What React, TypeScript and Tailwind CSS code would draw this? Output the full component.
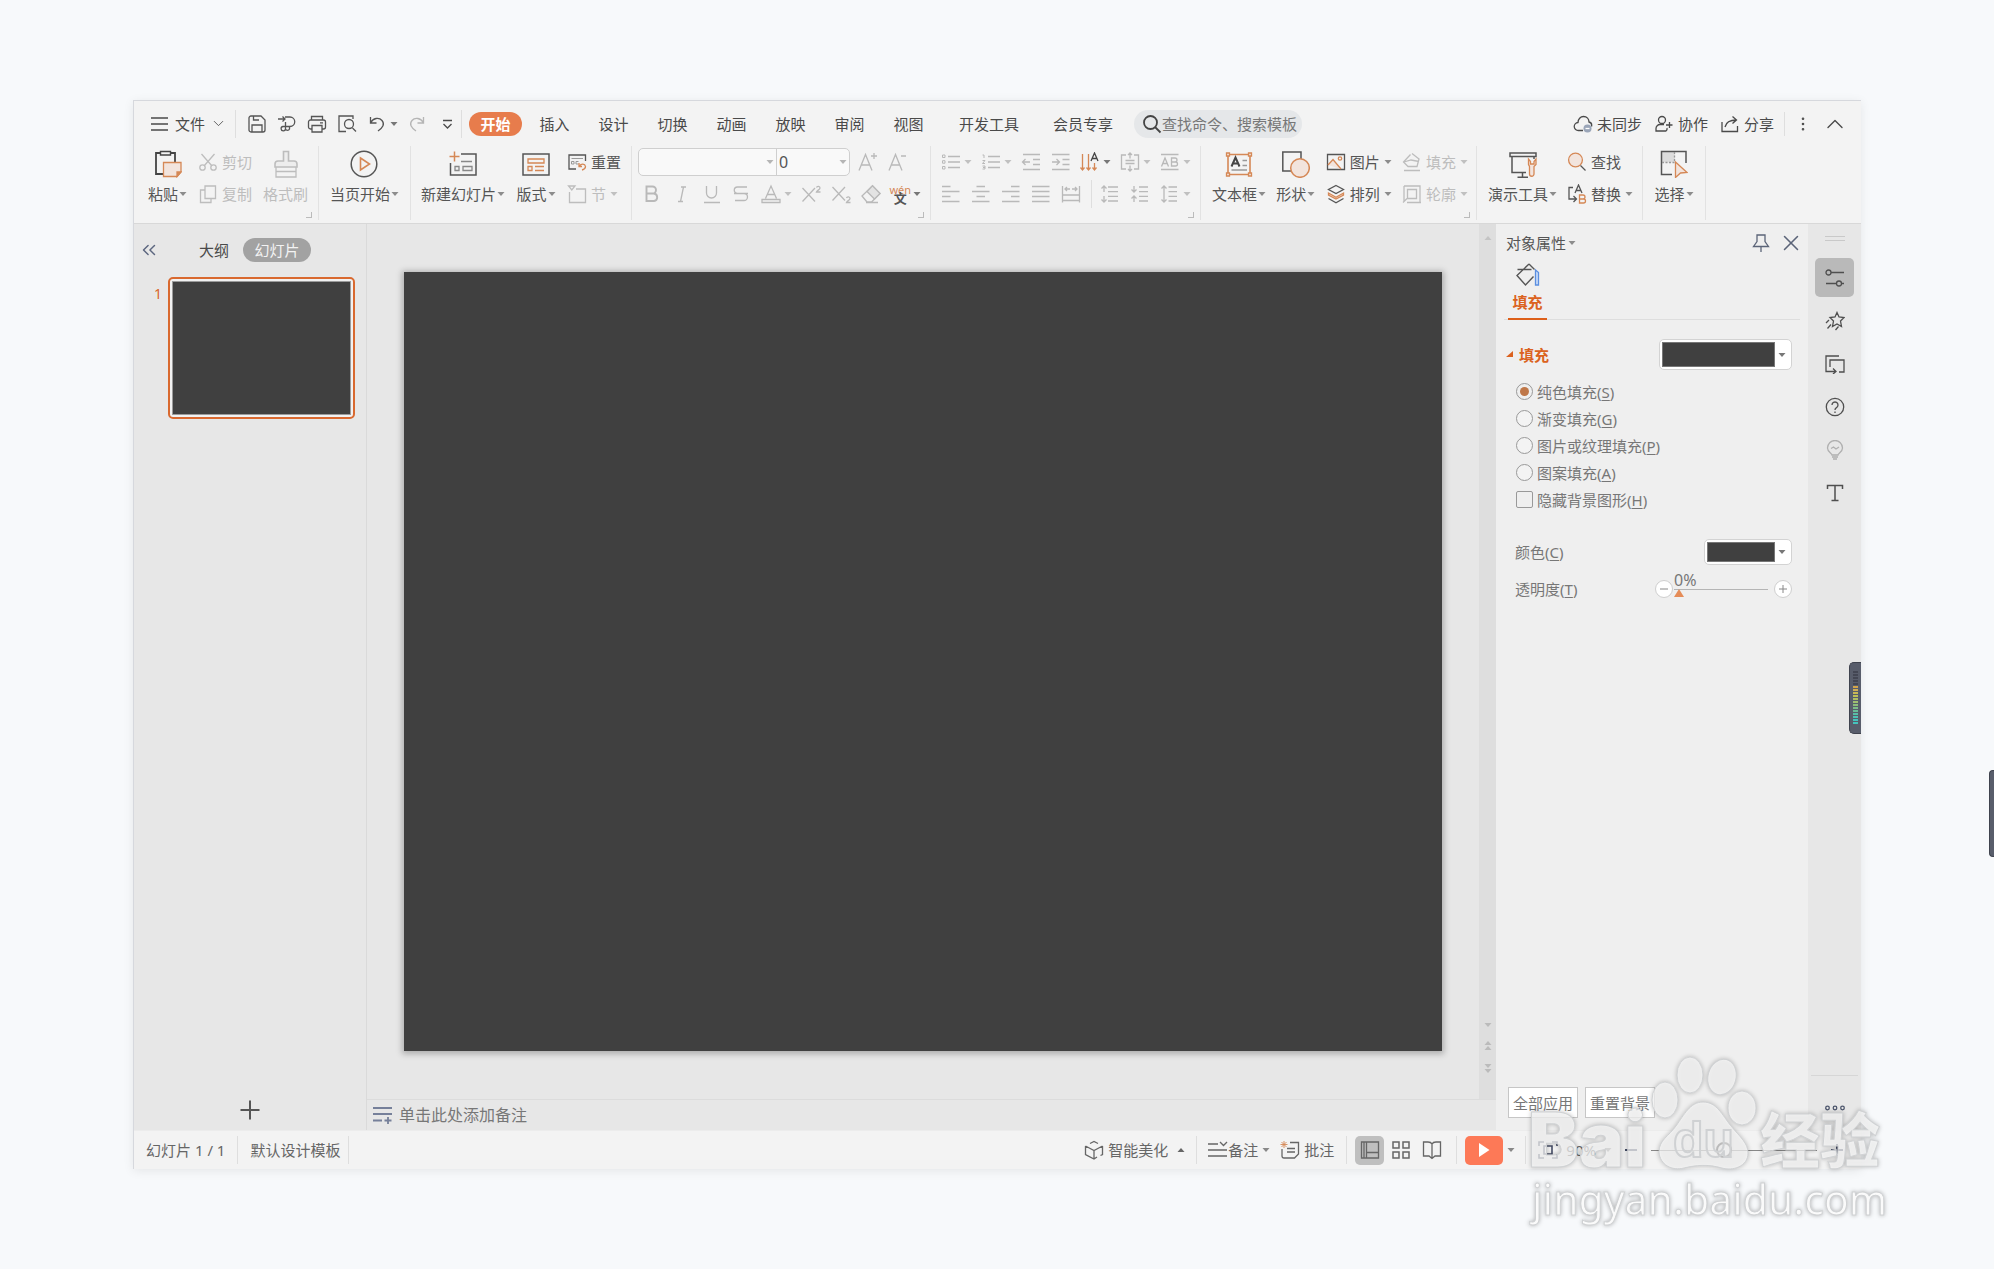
import React from 'react';
import { ChevronDown, ChevronUp, ChevronsLeft, MoreVertical, X } from 'lucide-react';

interface IconProps {
  size?: number;
  className?: string;
  children: React.ReactNode;
}

// Small icons use a 20x20 box, large ribbon icons a 28x28 one
const Icon: React.FC<IconProps> = ({ size = 20, className = '', children }) => (
  <svg
    width={size}
    height={size}
    viewBox={`0 0 ${size} ${size}`}
    fill="none"
    stroke="currentColor"
    strokeWidth="1.3"
    className={`shrink-0 ${className}`}
    aria-hidden="true"
  >
    {children}
  </svg>
);

const Caret: React.FC<{ className?: string; up?: boolean }> = ({ className = 'text-[#8c8c8c]', up = false }) => (
  <svg width="8" height="8" viewBox="0 0 8 8" className={`shrink-0 ${className}`} aria-hidden="true">
    <path d={up ? 'M4 2 L7.5 6 H0.5 Z' : 'M0.5 2 H7.5 L4 6 Z'} fill="currentColor" />
  </svg>
);

const ORANGE = '#d58856';
const PEACH = '#f2e4dd';

const icons = {
  menu: (
    <Icon>
      <path d="M1 4H18M1 10H18M1 16H18" />
    </Icon>
  ),
  save: (
    <Icon>
      <path d="M2 4a2 2 0 0 1 2-2H14l4 4V16a2 2 0 0 1-2 2H4a2 2 0 0 1-2-2ZM5 18V11H15V18M6.500 2V6H12" />
    </Icon>
  ),
  exportPdf: (
    <Icon>
      <path d="M1 5H8M5.500 2.500L8 5L5.500 7.500M8 3H13a4.500 4.500 0 0 1 0 9.500H6a2.200 2.200 0 1 0 2.500 2.200V8M8.500 12.500V15a2.200 2.200 0 0 0 4 0V12.500" />
    </Icon>
  ),
  print: (
    <Icon>
      <path d="M4.500 6V2.500H15.500V6M4.500 15H3.500a2 2 0 0 1-2-2V8a2 2 0 0 1 2-2H16.500a2 2 0 0 1 2 2V13a2 2 0 0 1-2 2H15.500M5 11.500H15V18H5ZM13 8.800H16" />
    </Icon>
  ),
  preview: (
    <Icon>
      <path d="M9 17.500H2V2H16V5M15.500 14L19 17.500" />
      <circle cx="12" cy="10" r="4.500" />
    </Icon>
  ),
  undo: (
    <Icon>
      <path d="M3.500 3V9H9.500M3.800 8.500C6 4 12 3 15 6.500C18 10 16 13.500 11 17" />
    </Icon>
  ),
  redo: (
    <Icon className="text-[#b5b5b5]">
      <path d="M16.500 3V9H10.500M16.200 8.500C14 4 8 3 5 6.500C2 10 4 13.500 9 17" />
    </Icon>
  ),
  more: (
    <Icon>
      <path d="M6 6.500H15M6.500 10L10.500 14L14.500 10" />
    </Icon>
  ),
  search: (
    <Icon className="text-[#444]">
      <circle cx="8.500" cy="8.500" r="6.500" strokeWidth="1.800" />
      <path d="M13 13L18.500 18.500" strokeWidth="1.800" />
    </Icon>
  ),
  cloud: (
    <Icon>
      <path d="M10 16.500H5.500a4 4 0 0 1-0.500-8C5 5 7.500 2.500 10.500 2.500C14 2.500 16 5 16 8C18 8.500 19 10.500 18.500 12.500" />
      <circle cx="14.500" cy="14.500" r="4" fill="#9aa5b8" stroke="none" />
      <path d="M12.500 14.500H16.500" stroke="#fff" />
    </Icon>
  ),
  person: (
    <Icon>
      <circle cx="8" cy="6" r="3.500" />
      <path d="M12 17H2V14.500a4 4 0 0 1 4-4H10M12 17a3 3 0 0 0 1-3M12 11H18.500M15.500 8V14" />
    </Icon>
  ),
  share: (
    <Icon>
      <path d="M2 8V17.500H17.500V12M5 13C6 8 10 6 16.500 6M12.500 2.500L16.500 6L12.500 9.500" />
    </Icon>
  ),
  paste: (
    <Icon size={28}>
      <path d="M10 24H2V3H21V12" stroke="#444" strokeWidth="1.800" />
      <path d="M6.500 1.500H16.500V5H6.500Z" stroke="#444" strokeWidth="1.400" fill="#f3f3f3" />
      <path d="M9.500 12.500H27V22L23 26.500H9.500Z" stroke={ORANGE} fill={PEACH} />
      <path d="M27 22H23V26.500Z" fill={ORANGE} stroke={ORANGE} />
    </Icon>
  ),
  cut: (
    <Icon>
      <path d="M3.500 2L14 14M16.500 2L6 14" />
      <circle cx="4.500" cy="15.500" r="2.700" />
      <circle cx="15.500" cy="15.500" r="2.700" />
    </Icon>
  ),
  copy: (
    <Icon>
      <path d="M7 2H17.500V14.500H7ZM7 6H2.500V18.500H13V14.500" />
    </Icon>
  ),
  brush: (
    <Icon size={28}>
      <path d="M11.500 11V1.500H16.500V11H22q3 0 3 3V17H3V14q0-3 3-3Z" fill="#ededed" strokeWidth="1.600" />
      <path d="M4 17V27H24V17M4 21.500H24" />
    </Icon>
  ),
  play: (
    <Icon size={28}>
      <circle cx="14" cy="14" r="12.800" strokeWidth="1.500" />
      <path d="M10.500 8L19.500 14L10.500 20Z" stroke={ORANGE} strokeWidth="1.600" />
    </Icon>
  ),
  newSlide: (
    <Icon size={28}>
      <path d="M12 4H27V25H1.500V13" strokeWidth="1.500" />
      <path d="M12 11.500H23M14 16.500H23V20.500H14ZM6 16.500H10V20.500H6Z" stroke="#888" />
      <path d="M5.500 1.500V11.500M0.500 6.500H10.500" stroke={ORANGE} strokeWidth="1.500" />
    </Icon>
  ),
  layout: (
    <Icon size={28}>
      <path d="M1 4H27V25H1Z" strokeWidth="1.500" />
      <path d="M6 9H22V13H6ZM6 16.500H10V20.500H6ZM13 16.500H22M13 20.500H22" stroke={ORANGE} />
    </Icon>
  ),
  reset: (
    <Icon>
      <path d="M9 17H2V3H18.500V9" />
      <path d="M4.500 6.500H16M4.500 9.500H7V12H4.500ZM11.500 9.500H9V12H11.500" stroke="#999" strokeWidth="1" />
      <path d="M12 11V14.500H15M12.500 14C14 11.500 18 11.500 18.500 14.500C18.500 16.500 17 17.500 15 18" stroke={ORANGE} />
    </Icon>
  ),
  section: (
    <Icon>
      <path d="M9 5H18.500V18.500H2.500V8M1.500 2H8L4.800 6Z" />
    </Icon>
  ),
  bold: (
    <Icon>
      <path d="M4.500 2.500H10.500a3.500 3.500 0 0 1 0 7H4.500ZM4.500 9.500H12a3.800 3.800 0 0 1 0 7.500H4.500Z" strokeWidth="1.900" />
    </Icon>
  ),
  italic: (
    <Icon>
      <path d="M9 3H14M6 17.500H11M11.500 3L8.500 17.500" />
    </Icon>
  ),
  underline: (
    <Icon>
      <path d="M4.500 2V9a5 5 0 0 0 10 0V2M2 18.500H18" />
    </Icon>
  ),
  strike: (
    <Icon>
      <path d="M16 3H6.500a3 3 0 0 0 0 6.500H13a3.500 3.500 0 0 1 0 7H4M3 9.500H17" />
    </Icon>
  ),
  fontColor: (
    <Icon>
      <path d="M4.500 14.500L10 2L15.500 14.500M6.500 10.500H13.500M1 15.500H19V18.500H1Z" />
    </Icon>
  ),
  superscript: (
    <Icon>
      <path d="M1.500 4L14 17.500M14 4L1.500 17.500M15.500 3.500C16 2 19 2 19 4C19 5.500 16 6.500 15.500 8H19.500" />
    </Icon>
  ),
  subscript: (
    <Icon>
      <path d="M1.500 3L14 16.500M14 3L1.500 16.500M15.500 14C16 12.500 19 12.500 19 14.500C19 16 16 17 15.500 18.500H19.500" />
    </Icon>
  ),
  eraser: (
    <Icon>
      <path d="M1 12L11.500 1.800L19 9.500L10.500 18H6ZM5 18.500H17" />
      <path d="M6 7.500L13.500 15L19 9.500L11.500 1.800Z" fill="#e3e3e3" />
    </Icon>
  ),
  growFont: (
    <Icon>
      <path d="M1 18.500L7.500 2.500L14 18.500M3.500 13H11.500M13 4H19M16 1V7" />
    </Icon>
  ),
  shrinkFont: (
    <Icon>
      <path d="M1 18.500L7.500 2.500L14 18.500M3.500 13H11.500M13 4H18" />
    </Icon>
  ),
  bullets: (
    <Icon>
      <path d="M7 4.500H19M7 10H19M7 15.500H19" />
      <path d="M1.500 3H4V5.500H1.500ZM1.500 8.700H4V11.200H1.500ZM1.500 14.500H4V17H1.500Z" strokeWidth="1" />
    </Icon>
  ),
  numbers: (
    <Icon>
      <path d="M7 4.500H19M7 10H19M7 15.500H19" />
      <path d="M1.500 3H3V6M1.500 8.500H4L1.500 11.500H4M1.500 14H4V17H1.500M2 15.500H4" strokeWidth="1" />
    </Icon>
  ),
  outdent: (
    <Icon>
      <path d="M2 2.500H19M12 7.500H19M12 12.500H19M2 17.500H19M9 10H1.500M4.500 7L1.500 10L4.500 13" />
    </Icon>
  ),
  indent: (
    <Icon>
      <path d="M1 2.500H18.500M11.500 7.500H18.500M11.500 12.500H18.500M1 17.500H18.500M1 10H8M5.500 7L8.500 10L5.500 13" />
    </Icon>
  ),
  textDirection: (
    <Icon>
      <path d="M2.500 2V17M0.500 15.500L2.500 18L4.500 15.500M8.500 2V17M6.500 15.500L8.500 18L10.500 15.500M14.500 11V17M12.500 15.500L14.500 18L16.500 15.500" stroke={ORANGE} />
      <path d="M11 9L14.500 1L18 9M12 6.500H17" stroke="#444" />
    </Icon>
  ),
  alignText: (
    <Icon>
      <path d="M6 3H1.500V17H6M14 3H18.500V17H14M5.500 8.500H14.500M5.500 11.500H14.500M10 6.500V1M8 3L10 1L12 3M10 13.500V19M8 17L10 19L12 17" />
    </Icon>
  ),
  charWidth: (
    <Icon>
      <path d="M1 2.500H18.500M1 17.500H18.500M1.500 14.500L5 6L8.500 14.500M2.500 11.500H7.500M11.500 6H15a2 2 0 0 1 0 4H11.500ZM11.500 10H15.500a2 2 0 0 1 0 4H11.500Z" />
    </Icon>
  ),
  alignLeft: (
    <Icon>
      <path d="M1 2.500H9.500M1 7.500H18.500M1 12.500H9.500M1 17.500H18.500" />
    </Icon>
  ),
  alignCenter: (
    <Icon>
      <path d="M5.500 2.500H14M1 7.500H18.500M5.500 12.500H14M1 17.500H18.500" />
    </Icon>
  ),
  alignRight: (
    <Icon>
      <path d="M10 2.500H18.500M1 7.500H18.500M10 12.500H18.500M1 17.500H18.500" />
    </Icon>
  ),
  justify: (
    <Icon>
      <path d="M1 2.500H18.500M1 7.500H18.500M1 12.500H18.500M1 17.500H18.500" />
    </Icon>
  ),
  distribute: (
    <Icon>
      <path d="M1.500 2V18.500M18.500 2V18.500M1.500 11H18.500M1.500 16.500H18.500M4 5H9M6 3L4 5L6 7M16 5H11M14 3L16 5L14 7" />
    </Icon>
  ),
  spaceMore: (
    <Icon>
      <path d="M8 3H18M8 7.700H18M8 12.400H18M8 17H18M4 8V2M1.500 4.500L4 2L6.500 4.500M4 12V18M1.500 15.500L4 18L6.500 15.500" />
    </Icon>
  ),
  spaceLess: (
    <Icon>
      <path d="M9 3H18M9 7.700H18M9 12.400H18M9 17H18M4 2V8M1.500 5.500L4 8L6.500 5.500M4 18V12M1.500 14.500L4 12L6.500 14.500" />
    </Icon>
  ),
  lineSpacing: (
    <Icon>
      <path d="M8.500 3H17M8.500 7.700H17M8.500 12.400H17M8.500 17H17M4 2V18M1.500 4.500L4 2L6.500 4.500M1.500 15.500L4 18L6.500 15.500" />
    </Icon>
  ),
  textBox: (
    <Icon size={28}>
      <path d="M3 4.500H25V24.500H3Z" stroke={ORANGE} strokeWidth="1.600" />
      <path d="M1.500 3H4.500V6H1.500ZM23.500 3H26.500V6H23.500ZM1.500 23H4.500V26H1.500ZM23.500 23H26.500V26H23.500Z" stroke={ORANGE} fill={PEACH} />
      <path d="M6.500 16.500L10.500 7.500L14.500 16.500M8 13.500H13" strokeWidth="2" stroke="#444" />
      <path d="M17.500 10.500H22M17.500 15.500H22M6.500 20H22" stroke="#999" />
    </Icon>
  ),
  shape: (
    <Icon size={28}>
      <path d="M0.800 2H19V21H0.800Z" strokeWidth="1.500" />
      <circle cx="18" cy="18" r="9.300" fill={PEACH} stroke={ORANGE} strokeWidth="1.500" />
    </Icon>
  ),
  picture: (
    <Icon>
      <path d="M1.500 2.500H18.500V17.500H1.500Z" />
      <path d="M2 13L7 7.500L15 17" stroke={ORANGE} fill={PEACH} />
      <circle cx="14" cy="6.500" r="1.700" stroke={ORANGE} />
    </Icon>
  ),
  arrange: (
    <Icon>
      <path d="M10 1.500L17.500 5.500L10 9.500L2.500 5.500Z" />
      <path d="M2.500 9L10 13.200L17.500 9V11L10 15L2.500 11Z" stroke={ORANGE} fill={PEACH} />
      <path d="M2.500 14.500L10 18.700L17.500 14.500" />
    </Icon>
  ),
  fill: (
    <Icon>
      <path d="M10 1.500L17 7L15 14.500H6L1.500 10L8.500 2.500M2 10L9 8L17 9.500M2 18.500H18" />
    </Icon>
  ),
  outline: (
    <Icon>
      <path d="M2 2H18V18M2 2V18M5.500 5.500H14.500V14.500H5.500ZM1 18.500L5 14.500M5 18.500H19" />
    </Icon>
  ),
  presentTools: (
    <Icon size={28}>
      <path d="M1 3H27V6.500H1ZM3 6.500V22.500H17M13.500 22.500V27M8.500 27.300H19M25 6.500V9" strokeWidth="1.500" />
      <path d="M19.500 9V14.500L20.500 16.500V24a2 2 0 0 0 4.500 0V16.500L27 14.500V9L25 11.500V14H21.500V11.500Z" fill={PEACH} stroke={ORANGE} />
    </Icon>
  ),
  find: (
    <Icon>
      <circle cx="8.500" cy="8" r="6.900" fill={PEACH} stroke={ORANGE} />
      <path d="M13.500 13.500L18.500 18.500" />
    </Icon>
  ),
  replace: (
    <Icon>
      <path d="M6 3.500H2V15H9M6.500 12L9.500 15L6.500 18" />
      <path d="M8 9L11.500 1L15 9M9.500 6.500H13.500" />
      <path d="M12.500 11H16a2 2 0 0 1 0 4H12.500ZM12.500 15H16.500a2 2 0 0 1 0 4H12.500Z" stroke={ORANGE} />
    </Icon>
  ),
  select: (
    <Icon size={28}>
      <path d="M2 2H15V12.500H2Z" fill="#dcdcdc" stroke="none" />
      <path d="M12 24.500H1.500V1.500H26V13" strokeWidth="1.500" />
      <path d="M2 12.500H14.500V2" strokeDasharray="2 1.500" stroke="#999" />
      <path d="M15.500 12L27 22.500L20.500 23L15.500 27.500Z" fill={PEACH} stroke={ORANGE} />
    </Icon>
  ),
  pin: (
    <Icon>
      <path d="M6 2H14V8.500L17.500 13.500H2.500L6 8.500ZM10 13.500V19" />
    </Icon>
  ),
  bucket: (
    <Icon size={28} className="text-[#555]">
      <path d="M15 3L3 14.500L11.500 24L19.500 15.500M15 3L20.500 8.500M3.500 8.500H17.500" strokeWidth="1.400" />
      <path d="M21.500 9L24.500 11.500V24H21.500Z" stroke="#5b8fe0" fill="#c9dcf8" />
    </Icon>
  ),
  sliders: (
    <Icon>
      <circle cx="3.500" cy="4.500" r="2.500" />
      <circle cx="14" cy="15.500" r="2.500" />
      <path d="M6 4.500H19M1 15.500H11.500M16.500 15.500H19" />
    </Icon>
  ),
  star: (
    <Icon>
      <path d="M12 1.500L14 6L19 6.500L15.500 10L16.500 15.500L12 13L7.500 15.500L8.500 10L5 6.500L10 6ZM4 9L1 12M6 13.500L2.500 17.500M13.500 15.500L10.500 19" />
    </Icon>
  ),
  layers: (
    <Icon>
      <path d="M14 2H1V17.500H11M5 13V6H19V18H14M8 14.500L11 17.500L8 20M5 6V10" />
    </Icon>
  ),
  help: (
    <Icon>
      <circle cx="10" cy="10" r="8.700" />
      <path d="M7 8a3 3 0 1 1 4.500 2.600Q10 11.500 10 13M10 14.500V16" />
    </Icon>
  ),
  bulb: (
    <Icon className="text-[#b0b0b0]">
      <path d="M7 15C7 13.500 2.500 12.500 2.500 8A7.500 7.500 0 0 1 17.500 8C17.500 12.500 13 13.500 13 15ZM7 17H13M8 19H12M6 8.500L8.500 7L11 9L14 7" />
    </Icon>
  ),
  text: (
    <Icon>
      <path d="M2.500 6V2.500H17.500V6M10 2.500V17.500M6.500 17.500H13.500" strokeWidth="1.500" />
    </Icon>
  ),
  notes: (
    <Icon className="text-[#76809a]">
      <path d="M0 3H19M0 9H19M0 15.500H9M15 12V19M11.500 15.500H18.500" strokeWidth="1.800" />
    </Icon>
  ),
  beautify: (
    <Icon>
      <path d="M6 3.500L10 1.500L14 3.500M1.500 6V14.500L10 19L13 17M18.500 6V14.500L16.500 15.500M1.500 6L10 10.500L18.500 6M10 10.500V18.500" />
    </Icon>
  ),
  notesToggle: (
    <Icon>
      <path d="M0 4H10M12 2L15.500 5.500L19 2M0 10H19M0 16H19" />
    </Icon>
  ),
  comment: (
    <Icon>
      <path d="M10 2.500H18.500V14L14.500 18H4q-2 0-2-2V9M7 8.500H15M7 12H15" />
      <path d="M4 1V8M0.500 4.500H7.500M1.500 2L6.500 7M6.500 2L1.500 7" stroke={ORANGE} strokeWidth="0.900" />
    </Icon>
  ),
  viewNormal: (
    <Icon>
      <path d="M1.500 2H18.500V18H1.500ZM6.500 2V18M6.500 12.500H18.500M4 2V18" />
    </Icon>
  ),
  viewGrid: (
    <Icon>
      <path d="M2 2H8V8H2ZM12 2H18V8H12ZM2 12H8V18H2ZM12 12H18V18H12Z" strokeWidth="1.500" />
    </Icon>
  ),
  viewRead: (
    <Icon>
      <path d="M10 4Q9 2 6 2H1.500V16H7L10 18.500L13 16H18.500V2H14Q11 2 10 4ZM10 4V18" />
    </Icon>
  ),
  fit: (
    <Icon className="text-[#454d66]">
      <path d="M1 6V2H6M14 2H19V6M19 14V18H14M6 18H1V14M6 6H14V14H6Z" strokeWidth="1.600" />
    </Icon>
  ),
};

interface ToolButtonProps {
  icon: React.ReactNode;
  title: string;
  caret?: boolean;
  muted?: boolean;
}

const ToolButton: React.FC<ToolButtonProps> = ({ icon, title, caret = false, muted = false }) => (
  <button
    title={title}
    className={`flex h-8 items-center gap-[3px] ${caret ? 'w-10' : 'w-[30px]'} ${muted ? 'text-[#b9b9b9]' : 'text-[#555]'}`}
  >
    {icon}
    {caret && <Caret className={muted ? 'text-[#c0c0c0]' : 'text-[#777]'} />}
  </button>
);

interface LabelButtonProps {
  icon: React.ReactNode;
  label: string;
  caret?: boolean;
  muted?: boolean;
}

const BigButton: React.FC<LabelButtonProps> = ({ icon, label, caret = false, muted = false }) => (
  <button className={`flex flex-col items-center pt-1 ${muted ? 'text-[#bdbdbd]' : 'text-[#555]'}`}>
    {icon}
    <span className="flex h-8 items-center gap-px whitespace-nowrap">
      {label}
      {caret && <Caret />}
    </span>
  </button>
);

const RowButton: React.FC<LabelButtonProps> = ({ icon, label, caret = false, muted = false }) => (
  <button className={`flex h-8 items-center gap-1 whitespace-nowrap ${muted ? 'text-[#bdbdbd]' : 'text-[#555]'}`}>
    {icon}
    {label}
    {caret && <Caret className={muted ? 'text-[#c0c0c0]' : 'text-[#8c8c8c]'} />}
  </button>
);

const Group: React.FC<{ className: string; corner?: boolean; children: React.ReactNode }> = ({ className, corner = false, children }) => (
  <div className={`relative flex h-[74px] shrink-0 border-r border-[#e2e2e2] ${className}`}>
    {children}
    {corner && <span className="absolute right-[6px] bottom-[2px] h-[6px] w-[6px] border-r border-b border-[#bbb]" />}
  </div>
);

const Divider: React.FC<{ className?: string }> = ({ className = 'h-7' }) => (
  <span className={`w-px shrink-0 bg-[#dedede] ${className}`} />
);

const tabs = ['插入', '设计', '切换', '动画', '放映', '审阅', '视图'];
const wideTabs = ['开发工具', '会员专享'];

const TabRow: React.FC = () => (
  <div className="flex h-[45px] items-center pl-4 text-[#4a4a4a]">
    <button className="flex items-center gap-[5px]">
      {icons.menu}
      文件
      <ChevronDown size={17} strokeWidth={1.2} />
    </button>
    <Divider className="ml-2 h-7" />
    <div className="ml-[11px] flex">
      <ToolButton icon={icons.save} title="保存" />
      <ToolButton icon={icons.exportPdf} title="输出为PDF" />
      <ToolButton icon={icons.print} title="打印" />
      <ToolButton icon={icons.preview} title="打印预览" />
      <ToolButton icon={icons.undo} title="撤销" caret />
      <ToolButton icon={icons.redo} title="恢复" />
    </div>
    <button title="自定义快速访问工具栏">{icons.more}</button>
    <Divider className="ml-1 h-7" />
    <nav className="ml-[7px] flex items-center">
      <button className="h-6 w-[53px] rounded-full bg-[#e77c4c] font-bold text-white">开始</button>
      <div className="ml-[3px] flex">
        {tabs.map((tab) => (
          <button key={tab} className="w-[59px]">{tab}</button>
        ))}
      </div>
      <div className="ml-1 flex">
        {wideTabs.map((tab) => (
          <button key={tab} className="w-[94px]">{tab}</button>
        ))}
      </div>
    </nav>
    <label className="ml-1 flex h-7 w-[168px] shrink-0 items-center rounded-full bg-[#e5e7e9] pl-2">
      {icons.search}
      <input
        aria-label="查找命令、搜索模板"
        placeholder="查找命令、搜索模板"
        className="w-full min-w-0 bg-transparent outline-none placeholder:text-[#777]"
      />
    </label>
    <div className="ml-auto flex items-center gap-3">
      <button className="flex items-center gap-1">{icons.cloud}未同步</button>
      <button className="flex items-center gap-1">{icons.person}协作</button>
      <button className="flex items-center gap-1">{icons.share}分享</button>
    </div>
    <div className="flex items-center gap-[9px] pr-3 pl-[10px]">
      <Divider className="h-6" />
      <button title="更多"><MoreVertical size={18} strokeWidth={1.5} /></button>
      <button title="折叠功能区"><ChevronUp size={28} strokeWidth={1.2} /></button>
    </div>
  </div>
);

const Ribbon: React.FC = () => (
  <div className="flex h-[77px]">
    <Group className="w-[185px] gap-[11px] pl-[14px]" corner>
      <BigButton icon={icons.paste} label="粘贴" caret />
      <div className="flex flex-col">
        <RowButton icon={icons.cut} label="剪切" muted />
        <RowButton icon={icons.copy} label="复制" muted />
      </div>
      <BigButton icon={icons.brush} label="格式刷" muted />
    </Group>
    <Group className="w-[92px] justify-center">
      <BigButton icon={icons.play} label="当页开始" caret />
    </Group>
    <Group className="w-[221px] justify-between px-[10px]">
      <BigButton icon={icons.newSlide} label="新建幻灯片" caret />
      <BigButton icon={icons.layout} label="版式" caret />
      <div className="flex flex-col items-start">
        <RowButton icon={icons.reset} label="重置" />
        <RowButton icon={icons.section} label="节" caret muted />
      </div>
    </Group>
    <Group className="w-[299px] flex-col pl-[6px]" corner>
      <div className="flex h-8 items-center">
        <div className="flex h-7 w-[212px] items-center rounded-[5px] border border-[#cfcfcf] bg-[#f9f9f9] pr-[2px]">
          <select aria-label="字体" className="h-full min-w-0 flex-1 appearance-none bg-transparent">
            <option></option>
          </select>
          <Caret className="mx-[2px] text-[#b5b5b5]" />
          <select aria-label="字号" className="h-full w-[63px] appearance-none border-l border-[#cfcfcf] bg-transparent pl-[2px] text-base text-[#555]">
            <option>0</option>
          </select>
          <Caret className="text-[#b5b5b5]" />
        </div>
        <div className="ml-2 flex">
          <ToolButton icon={icons.growFont} title="增大字号" muted />
          <ToolButton icon={icons.shrinkFont} title="减小字号" muted />
        </div>
      </div>
      <div className="flex pl-1">
        <ToolButton icon={icons.bold} title="加粗" muted />
        <ToolButton icon={icons.italic} title="倾斜" muted />
        <ToolButton icon={icons.underline} title="下划线" muted />
        <ToolButton icon={icons.strike} title="删除线" muted />
        <ToolButton icon={icons.fontColor} title="字体颜色" caret muted />
        <ToolButton icon={icons.superscript} title="上标" muted />
        <ToolButton icon={icons.subscript} title="下标" muted />
        <ToolButton icon={icons.eraser} title="清除格式" muted />
        <ToolButton
          title="拼音指南"
          caret
          icon={
            <span className="flex w-5 flex-col items-center text-[11px] leading-[9px]">
              <span className="text-[#d58856]">wén</span>
              <span className="text-[13px] font-bold">文</span>
            </span>
          }
        />
      </div>
    </Group>
    <Group className="w-[270px] flex-col pl-[10px]" corner>
      <div className="flex">
        <ToolButton icon={icons.bullets} title="项目符号" caret muted />
        <ToolButton icon={icons.numbers} title="编号" caret muted />
        <ToolButton icon={icons.outdent} title="减少缩进量" muted />
        <ToolButton icon={icons.indent} title="增加缩进量" muted />
        <ToolButton icon={icons.textDirection} title="文字方向" caret />
        <ToolButton icon={icons.alignText} title="对齐文本" caret muted />
        <ToolButton icon={icons.charWidth} title="字符宽度" caret muted />
      </div>
      <div className="flex items-center">
        <ToolButton icon={icons.alignLeft} title="左对齐" muted />
        <ToolButton icon={icons.alignCenter} title="居中对齐" muted />
        <ToolButton icon={icons.alignRight} title="右对齐" muted />
        <ToolButton icon={icons.justify} title="两端对齐" muted />
        <ToolButton icon={icons.distribute} title="分散对齐" muted />
        <Divider className="mr-2 h-7" />
        <ToolButton icon={icons.spaceMore} title="增大段落间距" muted />
        <ToolButton icon={icons.spaceLess} title="减小段落间距" muted />
        <ToolButton icon={icons.lineSpacing} title="行距" caret muted />
      </div>
    </Group>
    <Group className="w-[276px] justify-between pr-2 pl-[11px]" corner>
      <BigButton icon={icons.textBox} label="文本框" caret />
      <BigButton icon={icons.shape} label="形状" caret />
      <div className="flex flex-col">
        <RowButton icon={icons.picture} label="图片" caret />
        <RowButton icon={icons.arrange} label="排列" caret />
      </div>
      <div className="flex flex-col">
        <RowButton icon={icons.fill} label="填充" caret muted />
        <RowButton icon={icons.outline} label="轮廓" caret muted />
      </div>
    </Group>
    <Group className="w-[166px] justify-between pr-[9px] pl-[11px]">
      <BigButton icon={icons.presentTools} label="演示工具" caret />
      <div className="flex flex-col">
        <RowButton icon={icons.find} label="查找" />
        <RowButton icon={icons.replace} label="替换" caret />
      </div>
    </Group>
    <Group className="w-[63px] justify-center">
      <BigButton icon={icons.select} label="选择" caret />
    </Group>
  </div>
);

const SlidePane: React.FC = () => (
  <aside className="flex w-[233px] shrink-0 flex-col border-r border-[#dadada] bg-[#e7e7e7]">
    <div className="flex h-[51px] items-center pl-1">
      <button title="收起" className="text-[#5d6780]">
        <ChevronsLeft size={22} strokeWidth={1.6} />
      </button>
      <button className="ml-[39px] text-[#4a4a4a]">大纲</button>
      <button className="ml-[14px] h-6 w-[68px] rounded-full bg-[#a2a2a2] text-[#f3f3f3]">幻灯片</button>
    </div>
    <div className="flex gap-2 pt-[2px] pr-[11px] pl-5">
      <span className="w-[6px] pt-2 text-[14px] leading-[18px] text-[#d9662b]">1</span>
      <button title="幻灯片 1" className="flex-1 rounded-[5px] border-2 border-[#d9692f] bg-[#f1f1f1] p-[2px]">
        <div className="aspect-[4/3] border border-[#9b9b9b] bg-[#404040]" />
      </button>
    </div>
    <button title="新建幻灯片" className="mt-auto mb-[10px] self-center text-[#555]">
      <Icon>
        <path d="M0.500 10H19.500M10 0.500V19.500" strokeWidth="2" />
      </Icon>
    </button>
  </aside>
);

const Stage: React.FC = () => (
  <main className="flex min-w-0 flex-1 flex-col bg-[#e7e7e7]">
    <div className="flex flex-1">
      <div className="flex flex-1 items-center px-[37px]">
        <div className="aspect-[4/3] w-full bg-[#404040] shadow-[0_1px_6px_2px_rgba(0,0,0,0.25)]" />
      </div>
      <div className="flex w-[17px] flex-col items-center bg-[#dedede] pt-[10px] pb-6 text-[#bbb]">
        <Caret up className="mb-auto text-[#c4c4c4]" />
        <Caret className="mb-[10px] text-[#bbb]" />
        <Caret up className="-mb-[3px] text-[#bbb]" />
        <Caret up className="mb-[10px] text-[#bbb]" />
        <Caret className="-mb-[3px] text-[#bbb]" />
        <Caret className="text-[#bbb]" />
      </div>
    </div>
    <label className="flex h-[31px] items-center gap-[6px] border-t border-[#dcdcdc] pl-[6px]">
      {icons.notes}
      <input
        aria-label="备注"
        placeholder="单击此处添加备注"
        className="flex-1 bg-transparent text-base outline-none placeholder:text-[#777]"
      />
    </label>
  </main>
);

const fillModes = [
  { label: '纯色填充', hotkey: 'S' },
  { label: '渐变填充', hotkey: 'G' },
  { label: '图片或纹理填充', hotkey: 'P' },
  { label: '图案填充', hotkey: 'A' },
];

const Hotkey: React.FC<{ children: string }> = ({ children }) => (
  <>(<span className="underline underline-offset-2">{children}</span>)</>
);

const ColorSelect: React.FC<{ label: string; className: string }> = ({ label, className }) => (
  <span className={`flex items-center rounded-[5px] border border-[#d3d3d3] bg-white p-[2px] ${className}`}>
    <select aria-label={label} className="h-full min-w-0 flex-1 appearance-none border border-[#777] bg-[#404040] text-transparent">
      <option></option>
    </select>
    <Caret className="mx-[3px] text-[#777]" />
  </span>
);

const PropertiesPanel: React.FC = () => (
  <aside className="flex w-[312px] shrink-0 flex-col bg-[#efefef] px-2 text-[#777]">
    <div className="flex h-[37px] items-center text-[#555]">
      <button className="flex items-center gap-[2px] pl-[2px]">
        对象属性
        <Caret />
      </button>
      <button title="固定" className="ml-auto text-[#5b6478]">{icons.pin}</button>
      <button title="关闭" className="-mr-1 ml-[7px] text-[#5b6478]">
        <X size={26} strokeWidth={1.4} />
      </button>
    </div>
    <div className="flex border-b border-[#dedede]">
      <button className="-mb-px ml-1 flex w-[39px] flex-col items-center border-b-2 border-[#dd5f19] font-bold text-[#db6220]">
        {icons.bucket}
        <span className="h-[29px] leading-[26px]">填充</span>
      </button>
    </div>
    <div className="mt-[19px] flex items-center pr-2">
      <button className="flex items-center gap-[6px] pl-[2px] font-bold text-[#db6220]">
        <svg width="7" height="7" viewBox="0 0 7 7" aria-hidden="true">
          <path d="M7 0V6H0Z" fill="currentColor" />
        </svg>
        填充
      </button>
      <ColorSelect label="填充样式" className="ml-auto h-[31px] w-[133px]" />
    </div>
    <div className="mt-2 flex flex-col pl-3">
      {fillModes.map((mode, i) => (
        <label key={mode.hotkey} className="flex h-[27px] items-center gap-1">
          <input
            type="radio"
            name="fill-mode"
            defaultChecked={i === 0}
            className="h-[17px] w-[17px] appearance-none rounded-full border border-[#999] bg-[#f3f3f3] checked:bg-[#bf7748] checked:bg-clip-content checked:p-[3px]"
          />
          <span>{mode.label}<Hotkey>{mode.hotkey}</Hotkey></span>
        </label>
      ))}
      <label className="flex h-[27px] items-center gap-1">
        <input type="checkbox" className="h-[17px] w-[17px] appearance-none rounded-[2px] border border-[#999]" />
        <span>隐藏背景图形<Hotkey>H</Hotkey></span>
      </label>
    </div>
    <div className="mt-[26px] flex items-center justify-between pr-2 pl-[11px]">
      <span>颜色<Hotkey>C</Hotkey></span>
      <ColorSelect label="颜色" className="h-[26px] w-[88px]" />
    </div>
    <div className="mt-[10px] flex h-7 items-center pr-2 pl-[11px]">
      <label htmlFor="opacity">透明度<Hotkey>T</Hotkey></label>
      <div className="ml-auto flex items-center gap-px">
        <button title="减少" className="h-[18px] w-[18px] rounded-full border border-[#cfcfcf] bg-white text-[#888]">
          <Icon size={16}>
            <path d="M4 8H12" strokeWidth="1" />
          </Icon>
        </button>
        <div className="relative flex h-[18px] w-[94px] items-center">
          <span className="absolute -top-[9px] left-0 text-base leading-[18px]">0%</span>
          <input
            id="opacity"
            type="range"
            defaultValue={0}
            className="h-px w-full appearance-none bg-[#b5b5b5] [&::-webkit-slider-thumb]:mt-[8px] [&::-webkit-slider-thumb]:h-2 [&::-webkit-slider-thumb]:w-[10px] [&::-webkit-slider-thumb]:appearance-none [&::-webkit-slider-thumb]:bg-[#e58c58] [&::-webkit-slider-thumb]:[clip-path:polygon(50%_0,100%_100%,0_100%)]"
          />
        </div>
        <button title="增加" className="ml-[5px] h-[18px] w-[18px] rounded-full border border-[#cfcfcf] bg-white text-[#888]">
          <Icon size={16}>
            <path d="M4 8H12M8 4V12" strokeWidth="1" />
          </Icon>
        </button>
      </div>
    </div>
    <div className="mt-auto flex gap-[7px] pb-3 pl-1">
      <button className="h-[31px] w-[70px] border border-[#c6c6c6] bg-white whitespace-nowrap">全部应用</button>
      <button className="h-[31px] w-[70px] border border-[#c6c6c6] bg-white whitespace-nowrap">重置背景</button>
    </div>
  </aside>
);

const railItems = [
  { title: '属性', icon: icons.sliders },
  { title: '动画', icon: icons.star },
  { title: '切换', icon: icons.layers },
  { title: '帮助', icon: icons.help },
  { title: '推荐', icon: icons.bulb },
  { title: '文字', icon: icons.text },
];

const Rail: React.FC = () => (
  <aside className="flex w-[53px] shrink-0 flex-col items-center bg-[#e7e7e7] text-[#4f4f4f]">
    <span className="mt-3 h-[5px] w-5 border-y border-[#c9c9c9]" />
    <div className="mt-[17px] flex flex-col gap-1">
      {railItems.map((item, i) => (
        <button
          key={item.title}
          title={item.title}
          className={`flex h-[39px] w-[39px] items-center justify-center rounded-[5px] ${i === 0 ? 'bg-[#b9b9b9]' : ''}`}
        >
          {item.icon}
        </button>
      ))}
    </div>
    <span className="mt-auto h-px w-[47px] bg-[#d6d6d6]" />
    <button title="更多" className="mt-[22px] mb-3 text-[#4d566c]">
      <Icon>
        <circle cx="2.500" cy="10" r="1.800" />
        <circle cx="10" cy="10" r="1.800" />
        <circle cx="17.500" cy="10" r="1.800" />
      </Icon>
    </button>
  </aside>
);

const StatusBar: React.FC = () => (
  <footer className="flex h-[39px] items-center border-t border-[#ececec] pl-3 text-[#666]">
    <span>幻灯片 1 / 1</span>
    <Divider className="mx-3 h-7" />
    <span>默认设计模板</span>
    <Divider className="ml-2 h-7" />
    <div className="ml-auto flex items-center">
      <button className="flex items-center gap-1">
        {icons.beautify}
        智能美化
        <Caret up className="mx-[5px] text-[#666]" />
      </button>
      <Divider className="mr-[11px] ml-[6px] h-7" />
      <button className="flex items-center">
        {icons.notesToggle}
        备注
        <Caret className="ml-1 text-[#888]" />
      </button>
      <button className="ml-[10px] flex items-center gap-1">
        {icons.comment}
        批注
      </button>
      <Divider className="mr-2 ml-3 h-7" />
      <button title="普通视图" className="flex h-[29px] w-[29px] items-center justify-center rounded-[5px] bg-[#bfbfbf]">{icons.viewNormal}</button>
      <button title="幻灯片浏览" className="ml-[7px]">{icons.viewGrid}</button>
      <button title="阅读视图" className="ml-[11px]">{icons.viewRead}</button>
      <Divider className="mr-2 ml-[14px] h-7" />
      <button title="播放" className="flex h-[29px] w-[38px] items-center justify-center rounded-[5px] bg-[#fd7957]">
        <svg width="12" height="16" viewBox="0 0 12 16" fill="#fff" aria-hidden="true">
          <path d="M1 1L11.500 8L1 15Z" />
        </svg>
      </button>
      <Caret className="ml-1 text-[#888]" />
      <Divider className="mr-3 ml-[10px] h-7" />
      <button title="适应窗口">{icons.fit}</button>
      <button className="ml-2 flex items-center gap-2">
        90%
        <Caret />
      </button>
      <button title="缩小" className="ml-[13px] h-[2px] w-3 bg-[#444c66]" />
      <input
        type="range"
        aria-label="缩放"
        defaultValue={43}
        className="mx-[14px] h-px w-[166px] appearance-none bg-[#888] [&::-webkit-slider-thumb]:h-4 [&::-webkit-slider-thumb]:w-4 [&::-webkit-slider-thumb]:appearance-none [&::-webkit-slider-thumb]:rounded-full [&::-webkit-slider-thumb]:border-2 [&::-webkit-slider-thumb]:border-[#222] [&::-webkit-slider-thumb]:bg-[#f3f3f3]"
      />
      <button title="放大" className="mr-[18px] text-[#444c66]">
        <Icon size={12}>
          <path d="M0 6H12M6 0V12" strokeWidth="2" />
        </Icon>
      </button>
    </div>
  </footer>
);

const Watermark: React.FC = () => (
  <svg
    width="364"
    height="190"
    viewBox="0 0 364 190"
    className="pointer-events-none absolute right-[106px] bottom-[32px] drop-shadow-[0_0_2px_rgba(0,0,0,0.3)]"
    fill="#fff"
    fillOpacity="0.7"
    stroke="#cfd1d3"
    strokeWidth="1"
    aria-hidden="true"
  >
    <ellipse cx="141" cy="53" rx="13" ry="18" />
    <ellipse cx="166" cy="28" rx="13" ry="18" />
    <ellipse cx="198" cy="30" rx="14" ry="18" transform="rotate(14 198 30)" />
    <ellipse cx="218" cy="61" rx="14" ry="17" />
    <path d="M179 55C193 55 198 68 207 79C216 90 224 96 224 106C224 120 208 124 198 121C184 117 172 118 160 121C148 124 136 118 135 105C135 93 145 89 152 79C160 68 166 55 179 55Z" />
    <text x="4" y="120" fontSize="76" fontWeight="900" fontFamily="Inter, sans-serif">Bai</text>
    <text x="149" y="110" fontSize="50" fontFamily="'Liberation Sans', sans-serif" fontWeight="700" strokeWidth="2" fillOpacity="0.2">du</text>
    <text x="236" y="116" fontSize="60" fontWeight="900" fontFamily="'Noto Sans CJK SC', sans-serif">经验</text>
    <text x="8" y="168" fontSize="41" fontFamily="'Noto Sans', sans-serif" fillOpacity="0.9">jingyan.baidu.com</text>
  </svg>
);

const levelColors = [
  'bg-[#434653]', 'bg-[#434653]', 'bg-[#434653]', 'bg-[#434653]', 'bg-[#434653]',
  'bg-[#d3a54a]', 'bg-[#cfae55]', 'bg-[#c9b956]', 'bg-[#bfc157]', 'bg-[#b0bf63]', 'bg-[#9fbf70]',
  'bg-[#8dbd7a]', 'bg-[#7cbd88]', 'bg-[#69bd98]', 'bg-[#58bfa8]', 'bg-[#4dc2b4]', 'bg-[#45c4bd]', 'bg-[#45c4bd]',
];

const App: React.FC = () => {
  return (
    <div className="relative flex min-h-screen flex-col overflow-hidden bg-[#f7f9fb] px-[133px] py-[100px] font-['Noto_Sans','Noto_Sans_CJK_SC',sans-serif] text-[15px] leading-5">
      <div className="relative flex flex-1 flex-col border-t border-l border-[#d6d8dd] bg-[#f3f3f3] shadow-[0_2px_10px_rgba(0,0,0,0.08)]">
        <header className="border-b border-[#d8d8d8]">
          <TabRow />
          <Ribbon />
        </header>
        <div className="flex flex-1">
          <SlidePane />
          <Stage />
          <PropertiesPanel />
          <Rail />
        </div>
        <StatusBar />
        <div className="absolute top-[561px] right-0 flex h-[72px] w-3 flex-col items-center gap-px rounded-l-[5px] border border-r-0 border-[#3f434e] bg-[#585d6b] pt-2">
          {levelColors.map((color, i) => (
            <span key={i} className={`h-[2px] w-[5px] shrink-0 ${color}`} />
          ))}
        </div>
      </div>
      <div className="absolute top-[770px] right-0 h-[87px] w-[5px] rounded-l-[4px] border border-r-0 border-[#3f434e] bg-[#585d6b]" />
      <Watermark />
    </div>
  );
};

export default App;
